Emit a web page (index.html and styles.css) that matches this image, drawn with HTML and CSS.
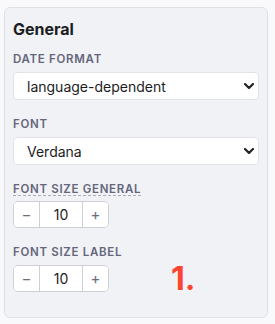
FILE: index.html
```html
<!DOCTYPE html>
<html lang="en">
<head>
<meta charset="UTF-8">
<title>Settings</title>
<meta name="viewport" content="width=device-width, initial-scale=1.0">
<link rel="stylesheet" href="styles.css">
</head>
<body>

<div class="card">
    <h2>General</h2>

    <!-- date format -->
    <div class="field">
        <label class="label" for="dateFormat">Date format</label>
        <div class="select-wrap">
            <select id="dateFormat">
                <option>language-dependent</option>
            </select>
            <svg class="chevron" viewBox="0 0 10 6"><path d="M1 1l4 4 4-4" fill="none" stroke="currentColor" stroke-width="2.2" stroke-linecap="round" stroke-linejoin="round"/></svg>
        </div>
    </div>

    <!-- font -->
    <div class="field">
        <label class="label" for="font">Font</label>
        <div class="select-wrap">
            <select id="font">
                <option>Verdana</option>
            </select>
            <svg class="chevron" viewBox="0 0 10 6"><path d="M1 1l4 4 4-4" fill="none" stroke="currentColor" stroke-width="2.2" stroke-linecap="round" stroke-linejoin="round"/></svg>
        </div>
    </div>

    <!-- font sizes -->
    <div class="field">
        <span class="label hint" title="Applies to all text">Font size general</span>
        <div class="stepper">
            <button aria-label="Decrease">&minus;</button>
            <input type="text" value="10">
            <button aria-label="Increase">+</button>
        </div>
    </div>

    <div class="field">
        <span class="label">Font size label</span>
        <div class="stepper">
            <button aria-label="Decrease">&minus;</button>
            <input type="text" value="10">
            <button aria-label="Increase">+</button>
        </div>
    </div>

    <!-- annotation marker -->
    <span class="marker">1.</span>
</div>

</body>
</html>
```

FILE: styles.css
```css
/* ===== base ===== */
*{box-sizing:border-box;margin:0;padding:0;}
body{
    font-family:Inter,"Noto Sans",sans-serif;
    background:#f9f9fb;
    color:#1c1c22;
    padding:7px 7px 5px 4px;
}

/* ===== card ===== */
.card{
    position:relative;
    background:#f1f2f6;
    border:1px solid #dfe0e6;
    border-radius:6px;
    padding:11px 8px 25px 8px;
}
h2{
    font-size:16px;
    line-height:20px;
    font-weight:700;
    margin-bottom:12px;
}

/* ===== fields ===== */
.field{margin-bottom:16px;}
.field:last-of-type{margin-bottom:0;}
.label{
    display:block;
    width:max-content;
    font-size:11.5px;
    line-height:16px;
    font-weight:600;
    letter-spacing:.06em;
    text-transform:uppercase;
    color:#64667a;
    margin-bottom:5px;
}
.hint{
    text-decoration:underline dashed #a9abbb;
    text-decoration-thickness:1px;
    text-underline-offset:2px;
    margin-bottom:4px;
}

/* select with custom chevron */
.select-wrap{position:relative;}
select{
    appearance:none;
    width:100%;
    height:28px;
    padding:0 28px 0 13px;
    font:inherit;
    font-size:14px;
    color:#1c1c22;
    background:#fff;
    border:1px solid #e2e3e8;
    border-radius:4px;
}
.chevron{
    position:absolute;
    right:5px;
    top:11px;
    width:10px;
    height:6px;
    color:#222;
    pointer-events:none;
}

/* number stepper */
.stepper{
    display:flex;
    width:96px;
    height:27px;
    background:#fff;
    border:1px solid #cfd0d6;
    border-radius:5px;
    overflow:hidden;
}
.stepper button{
    width:25px;
    border:none;
    background:#fff;
    color:#6a6c78;
    font:inherit;
    font-size:15px;
}
.stepper input{
    width:44px;
    border:none;
    border-left:1px solid #cfd0d6;
    border-right:1px solid #cfd0d6;
    text-align:center;
    font:inherit;
    font-size:14px;
    color:#1c1c22;
}

/* red annotation */
.marker{
    position:absolute;
    left:166px;
    top:253px;
    font-size:32px;
    line-height:36px;
    font-weight:700;
    color:#fb4532;
}
```
